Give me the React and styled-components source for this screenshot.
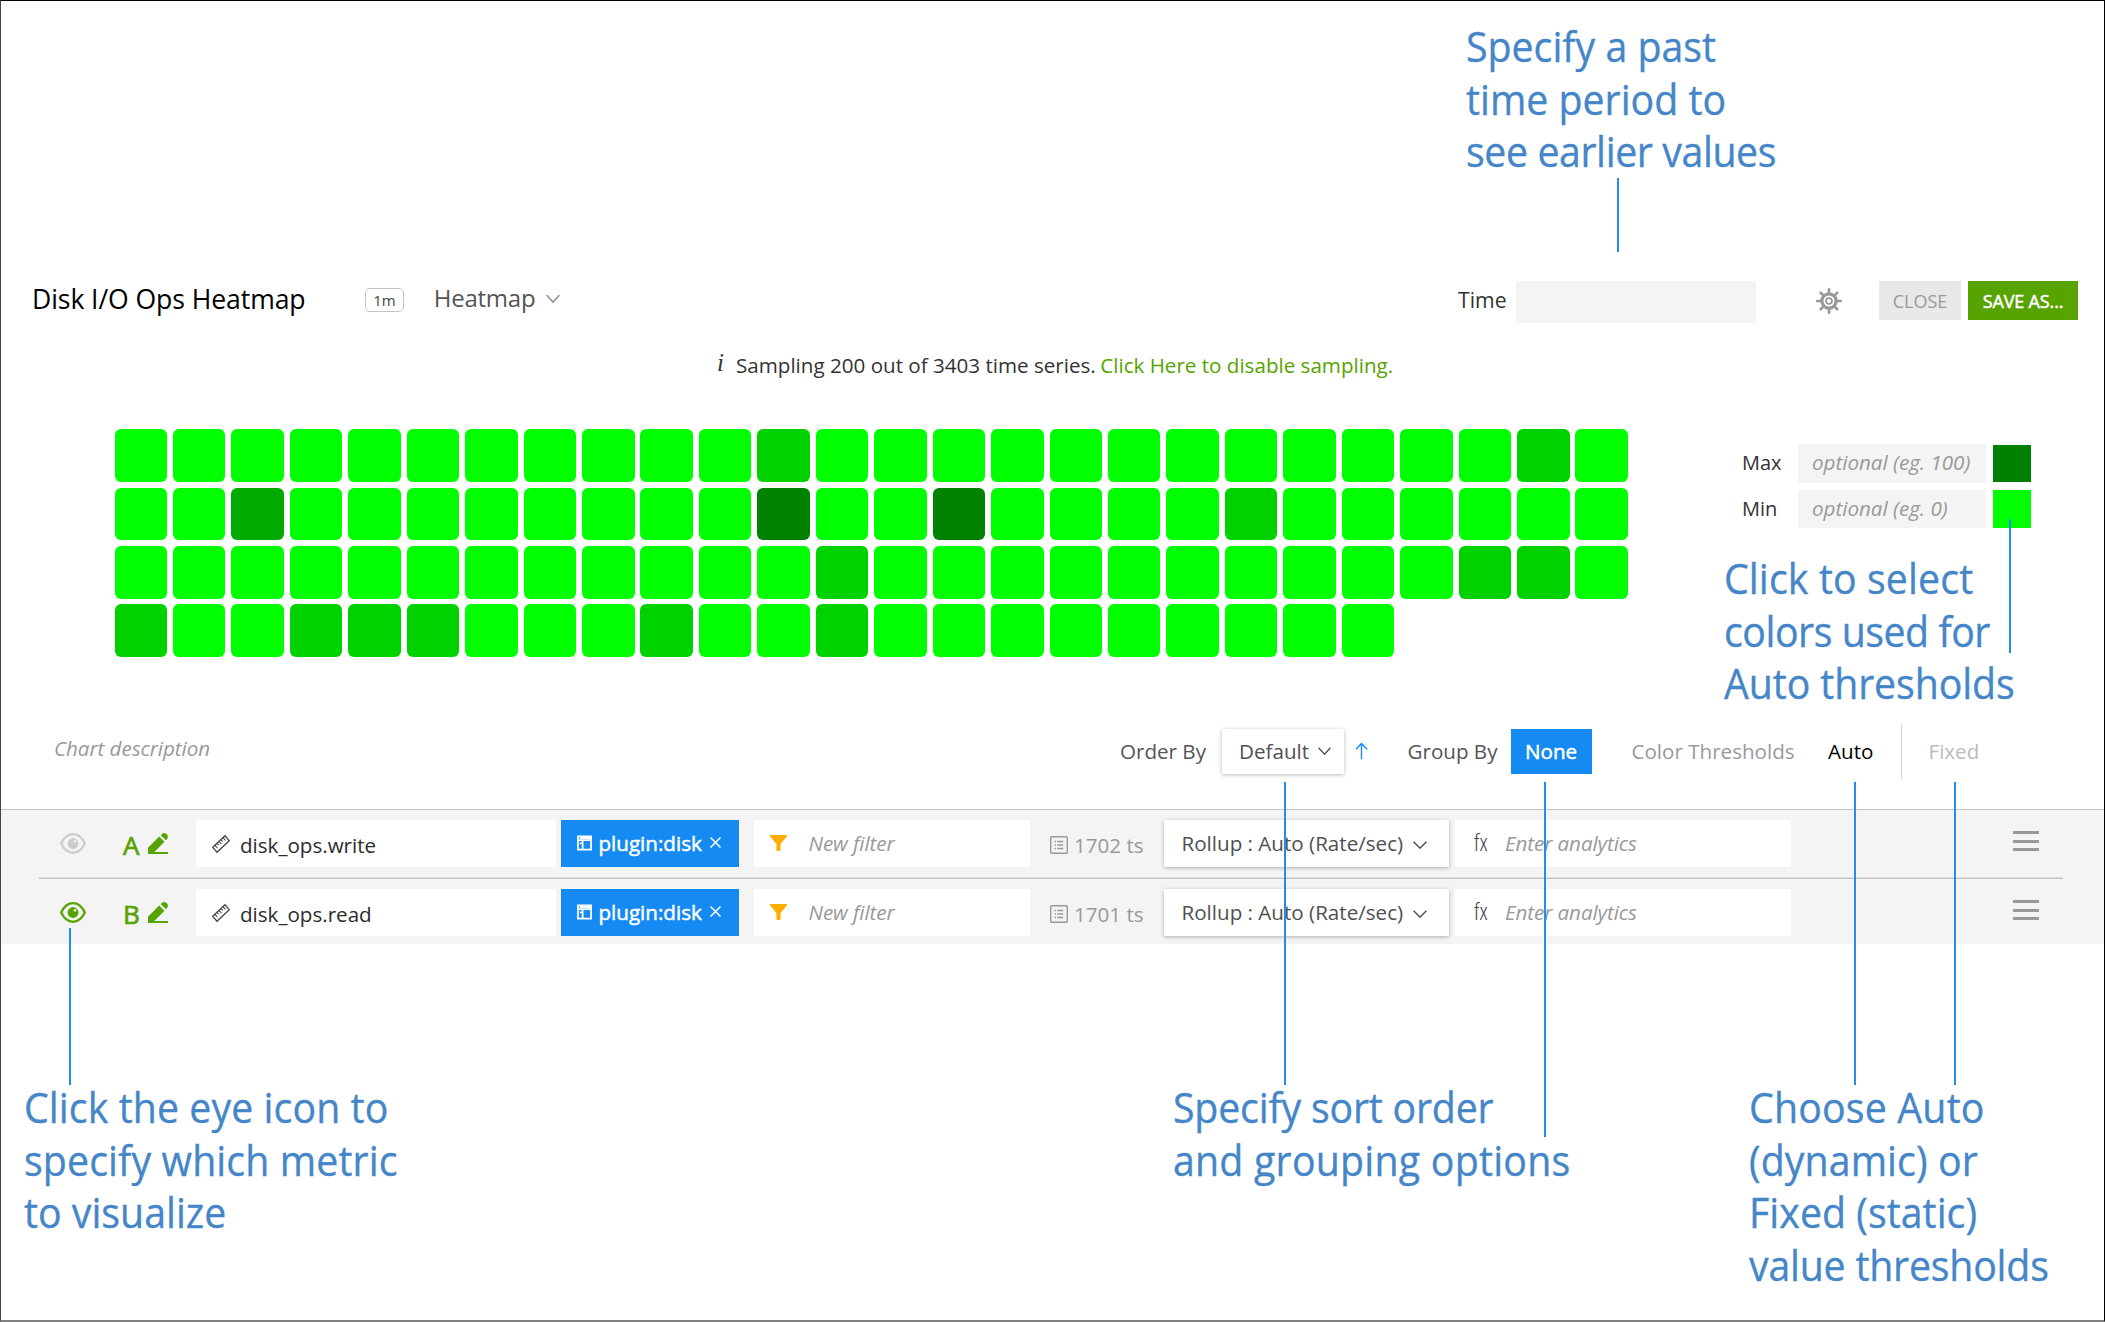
import React from "react";
import styled, { createGlobalStyle, css } from "styled-components";

const GlobalStyle = createGlobalStyle`
  *, *::before, *::after { box-sizing: border-box; }
  body { margin: 0; background: #fff; }
`;

const FONT = `"Open Sans", "Noto Sans", sans-serif`;

const Page = styled.div`
  position: relative;
  display: flex;
  flex-direction: column;
  width: 2105px;
  height: 1322px;
  overflow: hidden;
  padding-top: 281px;
  background: #fff;
  color: #333;
  font-family: ${FONT};
  font-size: 20.6px;
  line-height: 30px;
  white-space: nowrap;

  &::after {
    content: "";
    position: absolute;
    inset: 0;
    border: 1px solid #000;
    border-left-color: #444;
    border-bottom: 2px solid #808080;
    pointer-events: none;
  }
`;

/* ---------- header ---------- */

const Header = styled.header`
  display: grid;
  grid-template-columns: 334px 68px 1025px 58px 300px 63px 89px 110px;
  align-items: start;
  height: 66px;
  padding-left: 31px;
`;

const Title = styled.h1`
  margin: 0;
  padding-left: 1px;
  color: #000;
  font-size: 26.6px;
  font-weight: 400;
  line-height: 36px;
  letter-spacing: -0.09px;
`;

const Resolution = styled.span`
  width: 39px;
  height: 24px;
  margin-top: 7px;
  border: 1px solid #c4c4c4;
  border-radius: 5px;
  color: #444;
  font-size: 15px;
  line-height: 22px;
  text-align: center;
`;

const ChartType = styled.div`
  display: flex;
  align-items: center;
  gap: 11px;
  padding-left: 0.8px;
  color: #555;
  font-size: 24px;
  letter-spacing: -0.25px;
  line-height: 34px;
`;

const TimeLabel = styled.label`
  font-size: 21.2px;
  line-height: 38px;
`;

const TimeField = styled.div`
  width: 240px;
  height: 42px;
  background: #f4f4f4;
`;

const GearSlot = styled.div`
  display: flex;
  padding-top: 7px;
`;

const Button = styled.button`
  height: 39px;
  width: ${(p) => (p.$primary ? 110 : 82)}px;
  padding: 0;
  border: 0;
  background: ${(p) => (p.$primary ? "#57a300" : "#e8e8e8")};
  color: ${(p) => (p.$primary ? "#fff" : "#999")};
  font-family: inherit;
  font-size: 18px;
  letter-spacing: ${(p) => (p.$primary ? "-0.15px" : 0)};
  line-height: 38px;
  -webkit-text-stroke: ${(p) => (p.$primary ? "0.5px #fff" : "0")};
`;

/* ---------- sampling notice ---------- */

const Notice = styled.p`
  display: flex;
  margin: 0 0 0 717px;
  height: 82px;
  line-height: 36px;
`;

const InfoMark = styled.i`
  width: 19px;
  margin-top: -2px;
  font-family: "Liberation Serif", serif;
  font-size: 25px;
`;

const NoticeLink = styled.a`
  margin-left: 4.5px;
  color: #57a300;
`;

/* ---------- heatmap ---------- */

const ChartArea = styled.section`
  display: flex;
  align-items: flex-start;
  height: 294px;
  padding-left: 114.5px;
`;

const CellGrid = styled.div`
  display: grid;
  grid-template-columns: repeat(26, 52.5px);
  grid-auto-rows: 52.5px;
  gap: 5.9px 5.94px;
  padding-top: 0.3px;
`;

const CELL_COLORS = ["#00ff00", "#00d200", "#00aa00", "#008200"];

const Cell = styled.div`
  border-radius: 6px;
  background: ${(p) => CELL_COLORS[p.$level]};
`;

const Legend = styled.div`
  display: grid;
  grid-template-columns: 56px 188px 45px;
  row-gap: 7px;
  margin: 15px 0 0 114px;
`;

const LegendLabel = styled.label`
  font-size: 20px;
  line-height: 37px;
`;

const LegendField = styled.div`
  height: 38.5px;
  padding-left: 14px;
  background: #f4f4f4;
  color: #999;
  font-style: italic;
  line-height: 37px;
`;

const Swatch = styled.div`
  width: 38px;
  height: 37.5px;
  margin: 0.5px 0 0 7.5px;
  background: ${(p) => p.$color};
`;

/* ---------- options bar ---------- */

const Options = styled.section`
  display: grid;
  grid-template-columns: 1066px 102px 133px 52.5px 103px 121px 196.5px 73px 27.500px auto;
  align-items: center;
  height: 56px;
  padding-left: 54px;
  margin-bottom: 30px;
  color: #555;
`;

const Description = styled.span`
  padding-bottom: 7px;
  color: #999;
  font-style: italic;
  letter-spacing: -0.05px;
`;

const Option = styled.span`
  color: ${(p) => p.$color || "#555"};
`;

const Dropdown = styled.div`
  display: flex;
  align-items: center;
  gap: ${(p) => p.$gap}px;
  width: ${(p) => p.$width}px;
  height: ${(p) => p.$height}px;
  padding-left: ${(p) => p.$inset}px;
  padding-bottom: ${(p) => p.$lift || 0}px;
  background: #fff;
  color: #505050;
  box-shadow: 0 1px 4px rgba(0, 0, 0, 0.28);
`;

const GroupValue = styled.div`
  width: 81px;
  height: 45px;
  padding-left: 14.5px;
  background: #148af2;
  color: #fff;
  line-height: 44px;
  -webkit-text-stroke: 0.5px #fff;
`;

const Separator = styled.div`
  width: 1px;
  height: 55px;
  background: #d4d4d4;
`;

/* ---------- queries ---------- */

const Queries = styled.section`
  height: 135px;
  padding: 0 42px 0 39px;
  border-top: 1px solid #c4c4c4;
  background: #f4f4f4;
`;

const QueryRow = styled.div`
  display: grid;
  grid-template-columns: 62.5px 25.5px 48px 365px 192.5px 296.5px 114px 291px 558px 26px;
  height: 69px;
  padding: 10px 0 0 21px;

  & + & {
    height: 65px;
  }

  ${(p) =>
    p.$divided &&
    css`
      border-bottom: 1px solid #c2c2c2;
      box-shadow: inset 0 -1px #dedede;
    `}
`;

const Slot = styled.div`
  display: flex;
  align-items: center;
  height: 47px;
`;

const Letter = styled.span`
  padding-left: 0.5px;
  color: #57a300;
  font-size: 26px;
  line-height: 51px;
  -webkit-text-stroke: 0.7px #57a300;
`;

const Field = styled.div`
  display: flex;
  align-items: center;
  width: ${(p) => p.$width}px;
  height: 47px;
  padding-left: ${(p) => p.$inset}px;
  padding-bottom: ${(p) => p.$lift || 0}px;
  background: #fff;
`;

const MetricName = styled.span`
  margin-left: 10px;
  padding-top: 3px;
  color: #2c2c2c;
`;

const Placeholder = styled.span`
  margin-left: ${(p) => p.$gap}px;
  color: #999;
  font-style: italic;
  letter-spacing: -0.08px;
`;

const Fx = styled.span`
  width: 16px;
  margin-right: 15px;
  padding-bottom: 2px;
  color: #444;
  font-size: 24px;
  font-weight: 300;
  font-stretch: condensed;
`;

const Tag = styled.div`
  display: flex;
  align-items: center;
  width: 178px;
  height: 47px;
  padding: 0 0 2px 16px;
  background: #148af2;
  color: #fff;
`;

const TagText = styled.span`
  width: 103px;
  margin: 0 8.5px 0 6.5px;
  -webkit-text-stroke: 0.5px #fff;
`;

const SeriesCount = styled.div`
  display: flex;
  align-items: center;
  gap: 6px;
  height: 47px;
  padding-top: 3px;
  color: #999;
`;

const MenuBars = styled.div`
  display: flex;
  flex-direction: column;
  gap: 5.6px;
  padding-top: 11px;
`;

const Bar = styled.span`
  width: 26px;
  height: 3px;
  background: #999;
`;

/* ---------- callouts laid over the screen ---------- */

const Callout = styled.div`
  position: absolute;
  left: ${(p) => p.$x}px;
  top: ${(p) => p.$y}px;
  display: flex;
  flex-direction: column;
  color: #4486c8;
  font-size: 42px;
  line-height: 52.6px;
  transform: scaleX(0.935);
  transform-origin: 0 0;
  -webkit-text-stroke: 0.35px #4486c8;
`;

const CalloutLine = styled.span`
  letter-spacing: ${(p) => p.$tracking}px;
`;

const Leader = styled.div`
  position: absolute;
  left: ${(p) => p.$x}px;
  top: ${(p) => p.$from}px;
  width: 2px;
  height: ${(p) => p.$to - p.$from}px;
  background: #218fea;
`;

/* ---------- icons ---------- */

const Svg = styled.svg`
  display: block;
  flex: none;
  overflow: visible;
`;

const LoweredSvg = styled(Svg)`
  margin-top: ${(p) => p.$drop}px;
`;

const Chevron = ({ width = 14, height = 8, color = "#555", stroke = 1.6, drop = 0 }) => (
  <LoweredSvg $drop={drop} width={width} height={height} viewBox="0 0 14 8" fill="none" stroke={color} strokeWidth={stroke} preserveAspectRatio="none">
    <path d="M.6.8 7 7.2 13.4.8" />
  </LoweredSvg>
);

const Gear = () => (
  <Svg width="26" height="26" viewBox="0 0 26 26" fill="none" stroke="#999">
    <circle cx="13" cy="13" r="7.1" strokeWidth="3.2" />
    <circle cx="13" cy="13" r="2.9" strokeWidth="1.8" />
    <g strokeWidth="2.7" strokeLinecap="round">
      {[0, 45, 90, 135, 180, 225, 270, 315].map((a) => (
        <path key={a} d="M13 5V1.300" transform={`rotate(${a} 13 13)`} />
      ))}
    </g>
  </Svg>
);

const ArrowUp = () => (
  <Svg width="13" height="18" viewBox="0 0 14 18" fill="none" stroke="#148af2" strokeWidth="1.5">
    <path d="M7 18V1M1 7l6-6 6 6" />
  </Svg>
);

const Eye = ({ color }) => (
  <Svg width="26" height="21" viewBox="0 0 26 21">
    <path d="M1.200 10.500C4 4.500 8 1.200 13 1.200s9 3.300 11.800 9.300C22 16.500 18 19.800 13 19.800S4 16.500 1.200 10.500Z" fill="none" stroke={color} strokeWidth="2.300" strokeLinejoin="round" />
    <circle cx="13" cy="10.500" r="5.400" fill={color} />
    <circle cx="15" cy="8.300" r="1.400" fill="#f4f4f4" />
  </Svg>
);

const Pencil = () => (
  <Svg width="20" height="21" viewBox="0 0 20 21" fill="#57a300">
    <path d="M0 21v-6.300L11.200 3.500l5.300 5.300L6.300 19H20v2Z" />
    <path d="M12.800 2.200 14 1q1.700-1.700 4-.6 2.100 1.300 1.900 3.600 0 1.500-1.900 3.200Z" />
  </Svg>
);

const Ruler = () => (
  <Svg width="18" height="18" viewBox="0 0 18 18" fill="none" stroke="#444" strokeWidth="1.300">
    <path d="M13 .7 17.300 5.600 5 17.300.7 12.400Z" />
    <path d="m3 10.300 2.400 2.700M5 8.400l1.600 1.800M7 6.500l2.400 2.700M9 4.600l1.600 1.800M11 2.700l2.400 2.700" strokeWidth="1.100" />
  </Svg>
);

const TagIcon = () => (
  <Svg width="15" height="16" viewBox="0 0 16 16" fill="none" stroke="#fff" strokeWidth="1.900">
    <path d="M1 1h14v14H1ZM1 5h14M6 5v10M3 8.500h2M3 2.900h11" />
  </Svg>
);

const Cross = () => (
  <Svg width="11" height="11" viewBox="0 0 11 11" stroke="#fff" strokeWidth="1.600">
    <path d="m.5.500 10 10M10.500.500l-10 10" />
  </Svg>
);

const Funnel = () => (
  <Svg width="17" height="16" viewBox="0 0 17 16" fill="#ffae00">
    <path d="M0 0h17v1.200L10.600 9v6.300l-1 .7H7.400l-1-.7V9L0 1.200Z" />
  </Svg>
);

const ListIcon = () => (
  <Svg width="18" height="18" viewBox="0 0 18 18" fill="none" stroke="#999" strokeWidth="1.400">
    <rect x=".7" y=".7" width="16.600" height="16.600" rx="1" />
    <path d="M4.500 5.500H6M7.200 5.500h6M4.500 9H6M7.200 9h6M4.500 12.500H6M7.200 12.500h6" />
  </Svg>
);

/* ---------- data ---------- */

const CELLS = Array.from({ length: 100 }, () => 0);
[11, 24, 45, 64, 75, 76, 78, 81, 82, 83, 87, 90].forEach((i) => (CELLS[i] = 1));
CELLS[28] = 2;
CELLS[37] = 3;
CELLS[40] = 3;

const QUERIES = [
  { id: "A", metric: "disk_ops.write", count: "1702 ts", visible: false },
  { id: "B", metric: "disk_ops.read", count: "1701 ts", visible: true },
];

const CALLOUTS = [
  { x: 1465.5, y: 20, lines: [["Specify a past", 0], ["time period to", 0], ["see earlier values", -0.43]] },
  { x: 1723.5, y: 552, lines: [["Click to select", 0.12], ["colors used for", -0.5], ["Auto thresholds", -0.1]] },
  { x: 23.5, y: 1081, lines: [["Click the eye icon to", 0.08], ["specify which metric", 0.13], ["to visualize", 0] ] },
  { x: 1172.5, y: 1081, lines: [["Specify sort order", -0.2], ["and grouping options", 0.25]] },
  { x: 1748.5, y: 1081, lines: [["Choose Auto", 0.2], ["(dynamic) or", 0.1], ["Fixed (static)", 0.05], ["value thresholds", -0.22]] },
];

const LEADERS = [
  [1617, 178, 252],
  [2009, 519, 653],
  [69, 928, 1085],
  [1284, 782, 1085],
  [1544, 782, 1137],
  [1854, 782, 1085],
  [1954, 782, 1085],
];

function Query({ query, divided }) {
  return (
    <QueryRow $divided={divided}>
      <Slot>
        <Eye color={query.visible ? "#57a300" : "#ccc"} />
      </Slot>
      <Letter>{query.id}</Letter>
      <Slot>
        <Pencil />
      </Slot>
      <Field $width={359.5} $inset={16}>
        <Ruler />
        <MetricName>{query.metric}</MetricName>
      </Field>
      <Tag>
        <TagIcon />
        <TagText>plugin:disk</TagText>
        <Cross />
      </Tag>
      <Field $width={276} $inset={16.5} $lift={2}>
        <Funnel />
        <Placeholder $gap={21.5}>New filter</Placeholder>
      </Field>
      <SeriesCount>
        <ListIcon />
        {query.count}
      </SeriesCount>
      <Dropdown $width={285} $height={47} $inset={17.5} $gap={9.5} $lift={2}>
        Rollup : Auto (Rate/sec)
        <Chevron drop={4} />
      </Dropdown>
      <Field $width={336} $inset={19} $lift={2}>
        <Fx>fx</Fx>
        <Placeholder $gap={0}>Enter analytics</Placeholder>
      </Field>
      <MenuBars>
        <Bar />
        <Bar />
        <Bar />
      </MenuBars>
    </QueryRow>
  );
}

export default function App() {
  return (
    <>
      <GlobalStyle />
      <Page>
        <Header>
          <Title>Disk I/O Ops Heatmap</Title>
          <Resolution>1m</Resolution>
          <ChartType>
            Heatmap
            <Chevron height={9} color="#888" stroke={1.3} />
          </ChartType>
          <TimeLabel>Time</TimeLabel>
          <TimeField />
          <GearSlot>
            <Gear />
          </GearSlot>
          <Button>CLOSE</Button>
          <Button $primary>SAVE AS...</Button>
        </Header>

        <Notice>
          <InfoMark>i</InfoMark>
          Sampling 200 out of 3403 time series.
          <NoticeLink>Click Here to disable sampling.</NoticeLink>
        </Notice>

        <ChartArea>
          <CellGrid>
            {CELLS.map((level, i) => (
              <Cell key={i} $level={level} />
            ))}
          </CellGrid>
          <Legend>
            <LegendLabel>Max</LegendLabel>
            <LegendField>optional (eg. 100)</LegendField>
            <Swatch $color="#008000" />
            <LegendLabel>Min</LegendLabel>
            <LegendField>optional (eg. 0)</LegendField>
            <Swatch $color="#00ff00" />
          </Legend>
        </ChartArea>

        <Options>
          <Description>Chart description</Description>
          <Option>Order By</Option>
          <Dropdown $width={121.5} $height={45} $inset={17} $gap={9}>
            Default
            <Chevron width={13} />
          </Dropdown>
          <ArrowUp />
          <Option>Group By</Option>
          <GroupValue>None</GroupValue>
          <Option $color="#999">Color Thresholds</Option>
          <Option $color="#000">Auto</Option>
          <Separator />
          <Option $color="#bbb">Fixed</Option>
        </Options>

        <Queries>
          {QUERIES.map((q, i) => (
            <Query key={q.id} query={q} divided={i === 0} />
          ))}
        </Queries>

        {LEADERS.map(([x, from, to]) => (
          <Leader key={x} $x={x} $from={from} $to={to} />
        ))}
        {CALLOUTS.map((c) => (
          <Callout key={c.x} $x={c.x} $y={c.y}>
            {c.lines.map(([text, tracking]) => (
              <CalloutLine key={text} $tracking={tracking}>
                {text}
              </CalloutLine>
            ))}
          </Callout>
        ))}
      </Page>
    </>
  );
}
